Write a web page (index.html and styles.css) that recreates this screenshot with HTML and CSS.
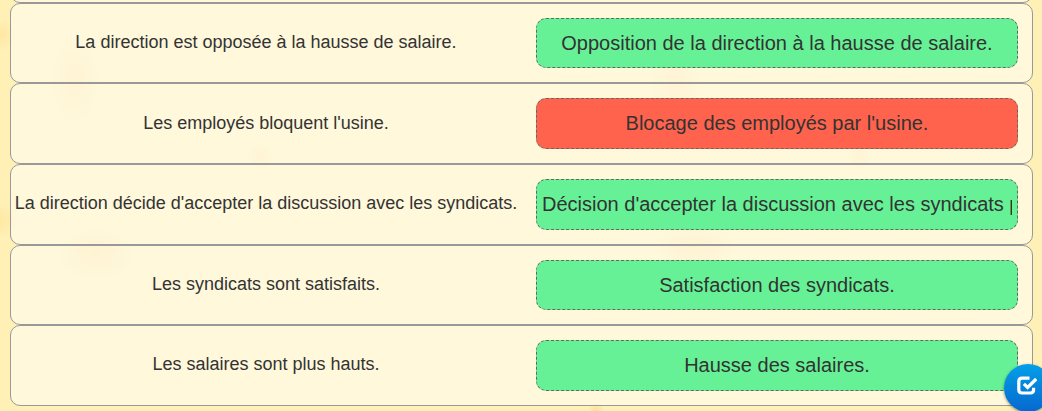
FILE: index.html
```html
<!DOCTYPE html>
<html lang="fr">
<head>
<meta charset="utf-8">
<title>Exercice</title>
<link rel="stylesheet" href="styles.css">
</head>
<body>
<main class="list">
  <div class="row row-previous"></div>
  <div class="row"><p class="prompt">La direction est opposée à la hausse de salaire.</p><div class="answer correct"><span>Opposition de la direction à la hausse de salaire.</span></div></div>
  <div class="row"><p class="prompt">Les employés bloquent l'usine.</p><div class="answer wrong"><span>Blocage des employés par l'usine.</span></div></div>
  <div class="row"><p class="prompt">La direction décide d'accepter la discussion avec les syndicats.</p><div class="answer correct"><span>Décision d'accepter la discussion avec les syndicats par la direction.</span></div></div>
  <div class="row"><p class="prompt">Les syndicats sont satisfaits.</p><div class="answer correct"><span>Satisfaction des syndicats.</span></div></div>
  <div class="row"><p class="prompt">Les salaires sont plus hauts.</p><div class="answer correct"><span>Hausse des salaires.</span></div></div>
</main>
<button class="check" aria-label="Vérifier">
  <svg class="check-icon" viewBox="0 0 21 20"><path d="M12.5 2.2H5Q1.8 2.2 1.8 5.4V13.8Q1.8 17 5 17H13.4Q16.6 17 16.6 13.8V11.8"/><path d="M6.9 7.8L10.6 11.5L19.2 3"/></svg>
</button>
</body>
</html>
```
FILE: styles.css
```css
* { box-sizing: border-box; }
body {
  margin: 0;
  height: 411px;
  overflow: hidden;
  position: relative;
  font-family: "Liberation Sans", Arial, sans-serif;
  color: #333;
  background:
    radial-gradient(ellipse 38px 26px at 96px 254px, rgba(255, 205, 120, .28), transparent),
    radial-gradient(ellipse 38px 26px at 696px 248px, rgba(255, 205, 120, .28), transparent),
    radial-gradient(circle at 260px 156px, rgba(255, 200, 120, .25), transparent 12px),
    radial-gradient(circle at 860px 156px, rgba(255, 200, 120, .25), transparent 12px),
    radial-gradient(ellipse 24px 44px at 75px 80px, rgba(255, 205, 120, .22), transparent),
    radial-gradient(ellipse 24px 44px at 675px 80px, rgba(255, 205, 120, .22), transparent),
    radial-gradient(circle at 0 35px, rgba(255, 215, 120, .35), transparent 16px),
    radial-gradient(circle at 0 220px, rgba(255, 215, 120, .3), transparent 18px),
    radial-gradient(circle at 596px 411px, rgba(255, 190, 100, .4), transparent 8px),
    #fff0b6;
}
.list { padding: 2.8px 9px 0 10px; }
.row {
  display: flex;
  align-items: center;
  height: 80.6px;
  padding: 0 14px 0 0;
  border: 1px solid #999;
  border-radius: 10px;
  background: rgba(255, 255, 255, .5);
}
.row-previous { margin-top: -80.6px; }
.prompt {
  flex: 1;
  margin: 0;
  padding-right: 15px;
  font-size: 18px;
  line-height: 24px;
  text-align: center;
  white-space: nowrap;
  position: relative;
  top: -1.1px;
}
.answer {
  width: 482px;
  height: 50.6px;
  padding: 0 5px;
  border: 1px dashed #666;
  border-radius: 10px;
  font-size: 20px;
  line-height: 49px;
  text-align: center;
}
.answer span { display: block; overflow: hidden; white-space: nowrap; }
.correct { background: #66f196; }
.wrong { background: #ff634d; }
.check {
  position: absolute;
  left: 1004px;
  top: 364px;
  width: 48px;
  height: 48px;
  padding: 0;
  border: 0;
  border-radius: 50%;
  background: linear-gradient(#049fe8, #0668cf);
  box-shadow: 0 1px 3px rgba(0, 0, 0, .45);
}
.check-icon {
  position: absolute;
  left: 13px;
  top: 12px;
  width: 21px;
  height: 20px;
  fill: none;
  stroke: #fff;
  stroke-width: 3.2;
}
```
